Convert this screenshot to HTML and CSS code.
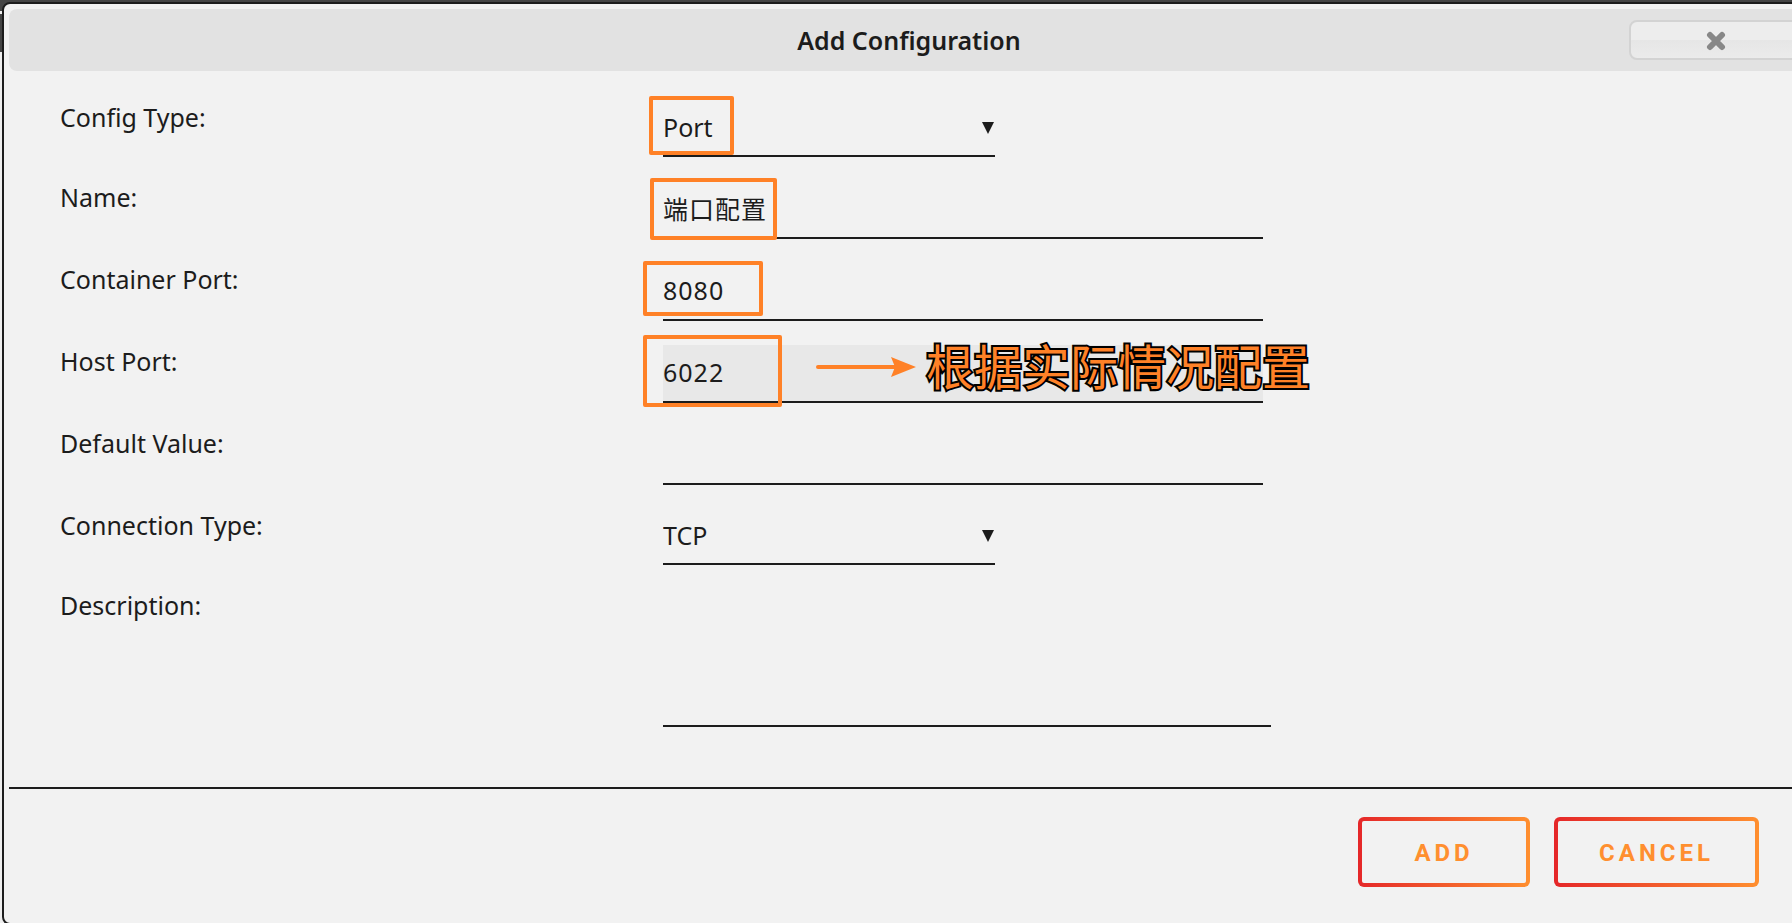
FILE: index.html
```html
<!DOCTYPE html>
<html lang="en">
<head>
<meta charset="UTF-8" />
<meta name="viewport" content="width=device-width, initial-scale=1" />
<title>Add Configuration</title>
<link rel="stylesheet" href="styles.css">
</head>
<body>

<div class="dialog" role="dialog" aria-labelledby="dialog-title">
  <div class="titlebar">
    <h1 id="dialog-title">Add Configuration</h1>
    <button type="button" class="close-btn" aria-label="Close">
      <svg width="20" height="20" viewBox="0 0 20 20"><path d="M4 4 L16 16 M16 4 L4 16" stroke="#888" stroke-width="6" stroke-linecap="round"/></svg>
    </button>
  </div>

  <form id="config-form">
    <div class="row">
      <label for="config-type">Config Type:</label>
      <div class="field select-field">
        <select id="config-type">
          <option selected>Port</option>
          <option>Path</option>
          <option>Variable</option>
        </select>
        <span class="mark mark-type"></span>
      </div>
    </div>
    <div class="row">
      <label for="config-name">Name:</label>
      <div class="field">
        <input type="text" id="config-name" value="端口配置" autocomplete="off" />
        <span class="mark mark-name"></span>
      </div>
    </div>
    <div class="row">
      <label for="container-port">Container Port:</label>
      <div class="field">
        <input type="text" id="container-port" value="8080" autocomplete="off" />
        <span class="mark mark-container"></span>
      </div>
    </div>
    <div class="row">
      <label for="host-port">Host Port:</label>
      <div class="field">
        <input type="text" id="host-port" class="active" value="6022" autocomplete="off" />
        <span class="mark mark-host"></span>
        <div class="note">
          <svg width="100" height="22" viewBox="0 0 100 22"><path d="M2 11H80" stroke="#ff8127" stroke-width="4" stroke-linecap="round"/><path d="M75 1L100 11L75 21L79 11Z" fill="#ff8127"/></svg>
          <span>根据实际情况配置</span>
        </div>
      </div>
    </div>
    <div class="row">
      <label for="default-value">Default Value:</label>
      <div class="field">
        <input type="text" id="default-value" autocomplete="off" />
      </div>
    </div>
    <div class="row">
      <label for="connection-type">Connection Type:</label>
      <div class="field select-field">
        <select id="connection-type">
          <option selected>TCP</option>
          <option>UDP</option>
        </select>
      </div>
    </div>
    <div class="row">
      <label for="description">Description:</label>
      <div class="field text-field">
        <textarea id="description"></textarea>
      </div>
    </div>
  </form>

  <div class="buttons">
    <button type="submit" form="config-form">ADD</button>
    <button type="button">CANCEL</button>
  </div>
</div>

</body>
</html>
```

FILE: styles.css
```css
* {
  box-sizing: border-box;
}
body {
  margin: 0;
  height: 100vh;
  overflow: hidden;
  padding: 2px 0 0 2px;
  background: linear-gradient(#444 11px, #eee 11px, #eee 14px, #444 14px, #444 52px, #eee 52px);
  font-family: "Noto Sans", "Noto Sans CJK SC", sans-serif;
  font-size: 25px;
  color: #1c1c1c;
}
/* the dialog runs off the right edge of the window */
.dialog {
  width: calc(100% + 24px);
  padding: 5px;
  border: 2px solid #1c1c1c;
  border-radius: 8px;
  background: #f2f2f2;
}
.titlebar {
  position: relative;
  display: flex;
  align-items: center;
  justify-content: center;
  height: 62px;
  border-radius: 8px;
  background: #e2e2e2;
}
h1 {
  margin: 0;
  font-size: 25px;
  font-weight: 600;
  line-height: 32px;
}
.close-btn {
  position: absolute;
  top: 11px;
  right: 6px;
  display: flex;
  align-items: center;
  justify-content: center;
  width: 174px;
  height: 40px;
  padding: 2px 0 0;
  border: 2px solid #d3d3d3;
  border-radius: 8px;
  background: linear-gradient(#ededed 50%, #e6e6e6 50%, #ebebeb);
}
form {
  padding: 18px 74px 48px 51px;
}
.row {
  display: grid;
  grid-template-columns: 36% 1fr;
  align-items: start;
  padding: 12px 0;
}
label {
  line-height: 32px;
}
.field {
  position: relative;
  display: flex;
  max-width: 600px;
}
.select-field {
  max-width: 332px;
}
.text-field {
  max-width: 608px;
}
input, select, textarea {
  width: 100%;
  height: 58px;
  margin: 0;
  padding: 0 0 2px;
  border: none;
  border-bottom: 2px solid #1c1c1c;
  border-radius: 0;
  outline: none;
  background: transparent;
  color: inherit;
  font: inherit;
  letter-spacing: 1px;
}
select {
  height: 56px;
  appearance: none;
  letter-spacing: normal;
}
textarea {
  height: 138px;
  resize: none;
}
input.active {
  background: #e8e8e8;
}
.select-field::after {
  content: "";
  position: absolute;
  top: 21px;
  right: 1px;
  width: 12px;
  height: 12px;
  background: #1c1c1c;
  clip-path: polygon(0 0, 100% 0, 50% 100%);
  pointer-events: none;
}
/* highlight frames and note over the fields */
.mark {
  position: absolute;
  border: 4px solid #ff8127;
  border-radius: 2px;
  pointer-events: none;
}
.mark-type {
  top: -5px;
  left: -14px;
  width: 85px;
  height: 59px;
}
.mark-name {
  top: -3px;
  left: -13px;
  width: 127px;
  height: 62px;
}
.mark-container {
  top: -2px;
  left: -20px;
  width: 120px;
  height: 55px;
}
.mark-host {
  top: -10px;
  left: -20px;
  width: 139px;
  height: 72px;
}
.note {
  position: absolute;
  top: -2px;
  left: 153px;
  display: flex;
  align-items: center;
  gap: 10px;
  color: #ff8127;
  font-size: 48px;
  line-height: 48px;
  white-space: nowrap;
  pointer-events: none;
}
.note span {
  -webkit-text-stroke: 4px #000;
  paint-order: stroke fill;
}
.buttons {
  display: flex;
  justify-content: flex-end;
  gap: 24px;
  padding: 28px 50px 31px;
  border-top: 2px solid #1c1c1c;
}
.buttons button {
  min-width: 172px;
  height: 70px;
  padding: 2px 41px 0;
  border: 4px solid transparent;
  border-radius: 6px;
  background: linear-gradient(#f2f2f2, #f2f2f2) padding-box, linear-gradient(90deg, #e52729, #ff8f2f) border-box;
  color: #ff8f2f;
  font-family: Roboto, sans-serif;
  font-size: 24px;
  font-weight: 700;
  letter-spacing: 4px;
  cursor: pointer;
}
```
